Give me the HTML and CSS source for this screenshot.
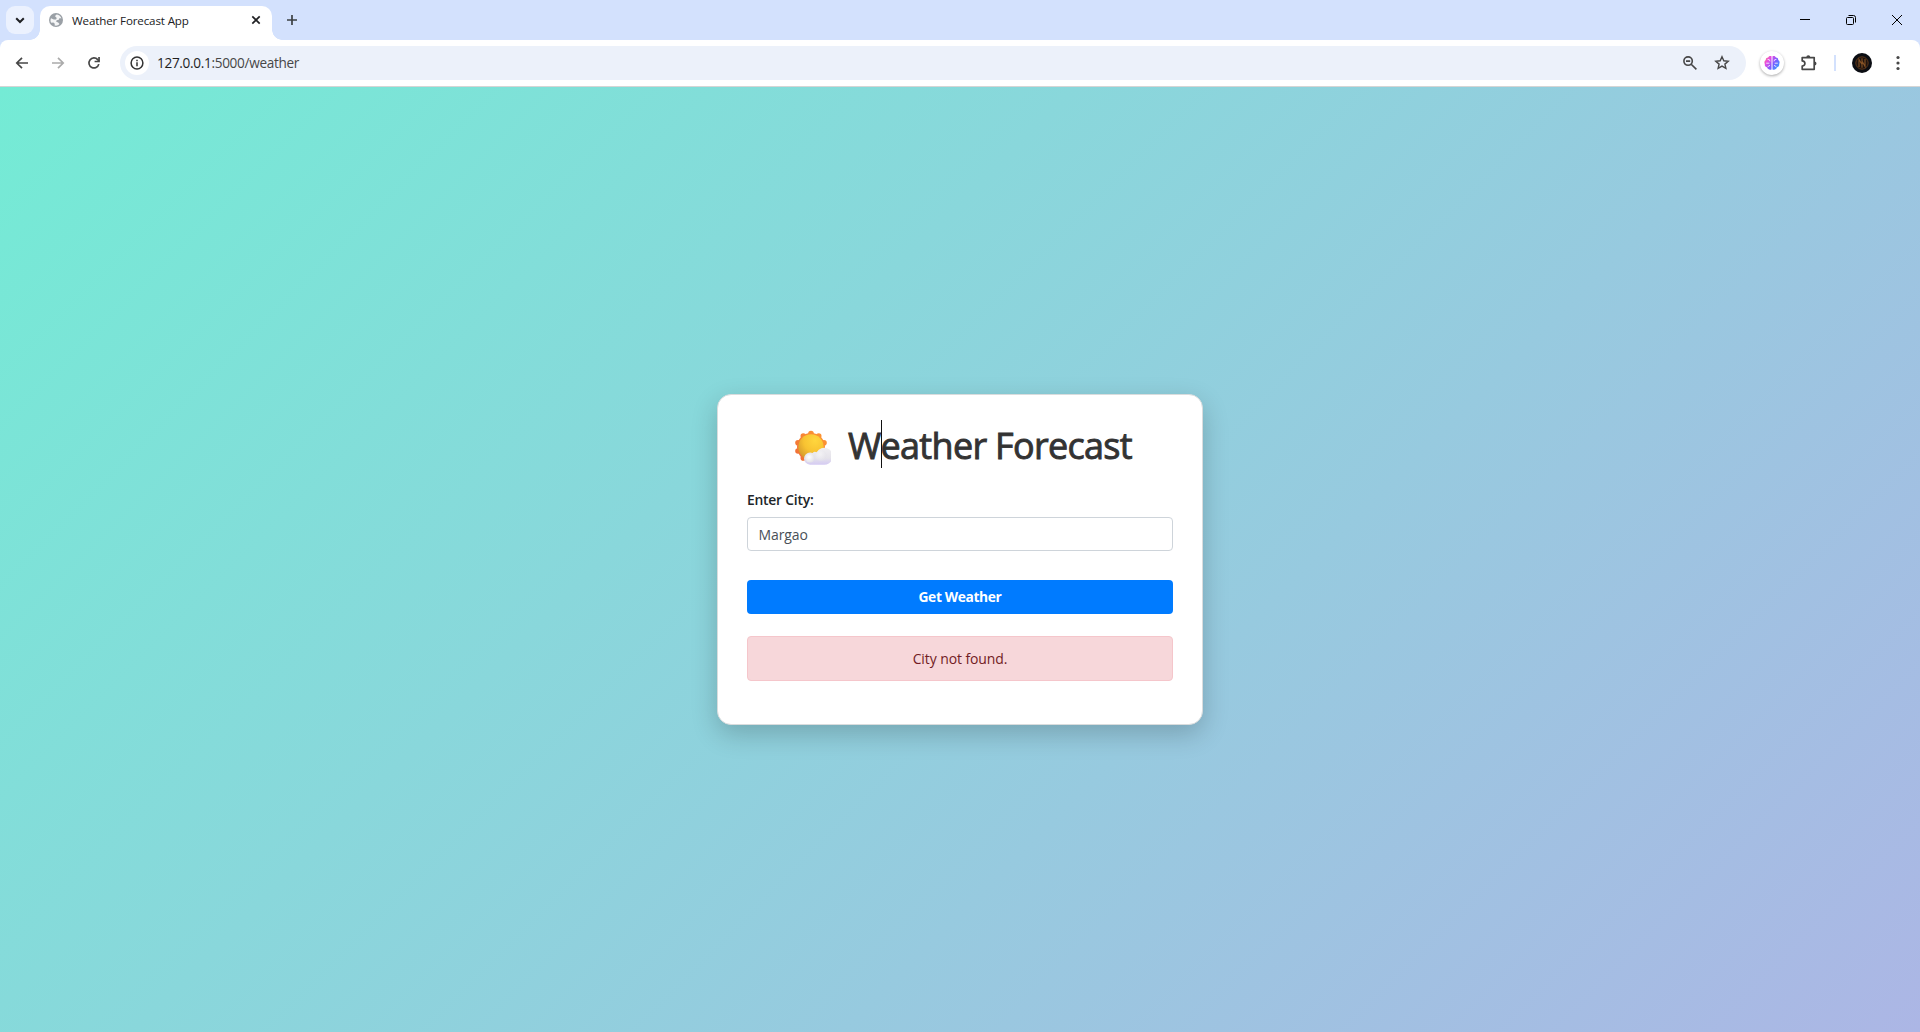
FILE: index.html
```html
<!DOCTYPE html>
<html lang="en">
<head>
<meta charset="utf-8">
<title>Weather Forecast App</title>
<link rel="stylesheet" href="styles.css">
</head>
<body>
<header class="browser">
  <div class="tab-strip">
    <button class="tab-search" aria-label="Search tabs"><svg width="28" height="28" viewBox="0 0 28 28"><path d="M10.2 12.2l3.8 3.8 3.8-3.8" fill="none" stroke="#202124" stroke-width="2"/></svg></button>
    <div class="tab">
      <svg class="favicon" width="14" height="14" viewBox="0 0 14 14"><circle cx="7" cy="7" r="7" fill="#9aa0a6"/><path d="M8 1.5c-1 .4-1.8 1-1.8 2L7.8 5 7 6.4H4.8L2 5.2C1.2 7 1.4 8.6 2.3 9.8l2.1-.2 1.4 1.2-.2 1.7c2 .4 3.6-.1 4.9-1.4L9.2 9.4l-2-.7.4-1.5 2.2-.5.8-1.6 1.8.3C11.8 3.3 10.1 1.8 8 1.5z" fill="#f4f5f6"/></svg>
      <span class="tab-title">Weather Forecast App</span>
      <svg class="tab-close" width="14" height="14" viewBox="0 0 14 14"><path d="M3.3 3.3l7.4 7.4M10.7 3.3l-7.4 7.4" stroke="#202124" stroke-width="1.7"/></svg>
    </div>
    <svg class="new-tab" width="14" height="14" viewBox="0 0 14 14"><path d="M7 2v10M2 7h10" stroke="#3c4043" stroke-width="1.7"/></svg>
    <div class="window-controls">
      <svg width="12" height="12" viewBox="0 0 12 12"><path d="M1 5.5h10" stroke="#000"/></svg>
      <svg width="12" height="12" viewBox="0 0 12 12" fill="none" stroke="#000"><rect x="1.5" y="3.5" width="7" height="7" rx="1"/><path d="M3.5 1.5h5q2 0 2 2v5"/></svg>
      <svg width="12" height="12" viewBox="0 0 12 12"><path d="M1 1l10 10M11 1L1 11" stroke="#000"/></svg>
    </div>
  </div>
  <div class="toolbar">
    <svg class="nav" width="16" height="16" viewBox="0 0 16 16" fill="none" stroke="#474747" stroke-width="1.7"><path d="M14 8H3M8 2.8L2.8 8 8 13.2"/></svg>
    <svg class="nav" width="16" height="16" viewBox="0 0 16 16" fill="none" stroke="#ababab" stroke-width="1.7"><path d="M2 8h11M8 2.8L13.2 8 8 13.2"/></svg>
    <svg class="nav" width="16" height="16" viewBox="0 0 16 16"><path d="M12.8 9.1A5 5 0 1 1 11.7 4.6L13 6" fill="none" stroke="#474747" stroke-width="1.7"/><path d="M13.9 2v5.3H8.6V5.7h3.6V2z" fill="#474747"/></svg>
    <div class="omnibox">
      <span class="site-info"><svg width="16" height="16" viewBox="0 0 16 16"><circle cx="8" cy="8" r="5.9" fill="none" stroke="#333" stroke-width="1.5"/><path d="M8 7.2v4M8 4.7v1.5" stroke="#333" stroke-width="1.5"/></svg></span>
      <span class="url"><b>127.0.0.1</b>:5000/weather</span>
      <svg class="zoom-icon" width="16" height="16" viewBox="0 0 16 16" fill="none" stroke="#474747" stroke-width="1.6"><circle cx="6.1" cy="6.1" r="4.2"/><path d="M9.2 9.2l5.2 5.2M4 6.1h4.2"/></svg>
      <svg width="16" height="16" viewBox="0 0 16 16"><path d="M8 1.8l1.8 4 4.4.4-3.3 2.9 1 4.3L8 11.1l-3.9 2.3 1-4.3-3.3-2.9 4.4-.4z" fill="none" stroke="#474747" stroke-width="1.4"/></svg>
    </div>
    <div class="extension">
      <svg width="16" height="16" viewBox="0 0 16 16"><defs><linearGradient id="brain" x1="0" y1="0" x2="16" y2="12" gradientUnits="userSpaceOnUse"><stop offset="0" stop-color="#ff9650"/><stop offset=".33" stop-color="#e84ae3"/><stop offset=".65" stop-color="#795cff"/><stop offset="1" stop-color="#31a6ff"/></linearGradient></defs><path d="M7.5 1.2C5.8.6 4.6 1.2 4.1 2.5 2.5 2.5 1.6 3.5 1.8 5 .3 6 .1 7.6.8 9c-.2 1.8.6 3 2 3.2.9 2.2 3 3 4.7 2.2zM8.5 1.2C10.2.6 11.4 1.2 11.9 2.5c1.6 0 2.5 1 2.3 2.5 1.5 1 1.7 2.6 1 4 .2 1.8-.6 3-2 3.2-.9 2.2-3 3-4.7 2.2z" fill="url(#brain)"/><path d="M3.6 4.4q2.4-.2 2.4 1.9M2.2 8.2h3.2M3.6 11.8l2.4-1.5M12.4 4.4q-2.4-.2-2.4 1.9M13.8 8.2h-3.2M12.4 11.8l-2.4-1.5" fill="none" stroke="#f4eeff" stroke-width=".9"/></svg>
    </div>
    <svg class="puzzle" width="18" height="18" viewBox="0 0 18 18"><path d="M2.2 3.6H14.2V15.3H2.2V12c3.6-.4 3.6-4.7 0-5.1z" fill="none" stroke="#474747" stroke-width="1.7" stroke-linejoin="round"/><path d="M6.3 3.2a2 2 0 0 1 4 0zM14.5 7.4a2 2 0 0 1 0 4z" fill="#474747"/></svg>
    <span class="divider"></span>
    <svg class="avatar" width="20" height="20" viewBox="0 0 20 20"><circle cx="10" cy="10" r="10" fill="#0b0d13"/><circle cx="10" cy="10" r="6.2" fill="#20140f" stroke="#5b3518"/><path d="M7 14V6.5l3 5V5.2M10 14.7V8l3 5.3V6" fill="none" stroke="#865225" stroke-width="1.1"/></svg>
    <svg class="menu" width="4" height="16" viewBox="0 0 4 16" fill="#474747"><circle cx="2" cy="2.5" r="1.6"/><circle cx="2" cy="8" r="1.6"/><circle cx="2" cy="13.5" r="1.6"/></svg>
  </div>
</header>
<main class="page">
  <section class="card">
    <h1 class="heading">
      <svg class="sun" width="38" height="36" viewBox="0 0 38 36">
        <defs>
          <linearGradient id="rays" x1="36" y1="0" x2="0" y2="34" gradientUnits="userSpaceOnUse"><stop offset="0" stop-color="#ff9d31"/><stop offset="1" stop-color="#ee6738"/></linearGradient>
          <radialGradient id="disc" cx=".66" cy=".25" r=".8"><stop offset="0" stop-color="#ffd63d"/><stop offset=".55" stop-color="#f8c332"/><stop offset="1" stop-color="#d59a2c"/></radialGradient>
          <linearGradient id="cloud" x1="0" y1="0" x2="0" y2="1"><stop offset="0" stop-color="#f0eff2"/><stop offset=".6" stop-color="#e5e3ea"/><stop offset="1" stop-color="#d4caf3"/></linearGradient>
          <radialGradient id="puff" cx=".4" cy=".4" r=".6"><stop offset="0" stop-color="#fff"/><stop offset="1" stop-color="#e3e2e8"/></radialGradient>
        </defs>
        <g fill="url(#rays)"><circle cx="18" cy="17" r="14"/><circle cx="18" cy="3.6" r="2.8"/><circle cx="25.7" cy="6.1" r="2.8"/><circle cx="31" cy="12.8" r="2.8"/><circle cx="31" cy="21" r="2.8"/><circle cx="10.3" cy="6.1" r="2.8"/><circle cx="5" cy="12.8" r="2.8"/><circle cx="5" cy="21" r="2.8"/><circle cx="10.3" cy="27.9" r="2.8"/></g>
        <circle cx="18" cy="17" r="12.7" fill="url(#disc)"/>
        <path d="M17 34.7a6.1 6.1 0 0 1 .2-12.2q1.3 0 2.4.4 1.8-2.1 4.2-.6a8.5 8.5 0 1 1 6 12.4z" fill="url(#cloud)"/>
        <circle cx="17" cy="28" r="4.5" fill="url(#puff)"/><circle cx="28" cy="25.5" r="5.5" fill="url(#puff)" opacity=".45"/>
      </svg>
      <span class="title">W<i class="caret"></i>eather Forecast</span>
    </h1>
    <form class="form">
      <label class="label" for="city"><span>Enter City:</span></label>
      <input class="input" id="city" value="Margao">
      <button class="submit" type="button">Get Weather</button>
    </form>
    <div class="alert">City not found.</div>
  </section>
</main>
</body>
</html>
```
FILE: styles.css
```css
* { box-sizing: border-box; }
body { margin: 0; height: 1032px; display: flex; flex-direction: column; overflow: hidden; font-family: "Open Sans", "Noto Sans", sans-serif; }
svg { display: block; flex: none; }
button { border: 0; padding: 0; }
.browser { height: 87px; background: #d3e1fd; border-bottom: 1px solid #d5d5d5; flex: none; }
.tab-strip { height: 40px; display: flex; align-items: center; padding: 0 6px; }
.tab-search { width: 28px; height: 28px; border-radius: 9px; background: #ebf1fe; }
.tab { position: relative; width: 232px; height: 34px; margin: 6px 0 0 6px; padding: 0 9px; background: #fff; border-radius: 10px 10px 0 0; display: flex; align-items: center; }
.tab::before, .tab::after { content: ""; position: absolute; bottom: 0; width: 10px; height: 10px; }
.tab::before { left: -10px; background: radial-gradient(circle at 0 0, transparent 9.5px, #fff 10px); }
.tab::after { right: -10px; background: radial-gradient(circle at 100% 0, transparent 9.5px, #fff 10px); }
.favicon { margin-top: -6px; }
.tab-title { margin: -4px 0 0 9px; font-size: 11.6px; line-height: 18px; letter-spacing: -.14px; color: #202124; white-space: nowrap; }
.tab-close { margin: -6px 0 0 auto; }
.new-tab { margin-left: 13px; }
.window-controls { display: flex; gap: 34px; margin-left: auto; padding-right: 11px; }
.toolbar { height: 46px; background: #fff; border-radius: 8px 8px 0 0; display: flex; align-items: center; padding: 0 20px 0 14px; }
.nav { margin-right: 20px; }
.omnibox { width: 1626px; height: 34px; background: #ecf1fa; border-radius: 17px; display: flex; align-items: center; padding: 0 16px 0 5px; margin-left: -2px; }
.site-info { width: 24px; height: 24px; border-radius: 50%; background: #fff; display: grid; place-items: center; }
.url { margin: 0 0 0 8px; font-size: 13.6px; line-height: 20px; letter-spacing: -.32px; color: #474747; }
.url b { font-weight: 400; color: #1f1f1f; }
.zoom-icon { margin: 0 16px 0 auto; }
.extension { width: 24px; height: 24px; margin-left: 14px; border-radius: 50%; background: #fff; box-shadow: 0 1px 3px #0005; display: grid; place-items: center; }
.puzzle { margin-left: 16px; }
.divider { width: 2px; height: 16px; background: #d3e1fd; margin-left: 16px; }
.avatar { margin-left: 16px; }
.menu { margin-left: auto; }
.page { flex: 1; display: flex; align-items: center; justify-content: center; background: linear-gradient(135deg, #74ebd5, #acb6e5); }
.card { width: 486px; height: 331px; padding: 28px 29px; background: #fff; border: 1px solid #d9dcdd; border-radius: 14px; box-shadow: 0 9px 27px #0003; }
.heading { height: 44px; margin: 0 0 2px; padding-left: 46px; display: flex; align-items: center; gap: 17px; color: #333; }
.sun { margin-top: 5px; }
.title { position: relative; padding-top: 2px; font-size: 36px; font-weight: 400; line-height: 44px; letter-spacing: -.7px; -webkit-text-stroke: .9px #333; white-space: nowrap; }
.caret { position: absolute; left: 33px; top: -2px; width: 1px; height: 48px; background: #111; }
.form { display: flex; flex-direction: column; }
.label { margin-top: 20px; height: 20px; font-size: 13.9px; line-height: 21px; letter-spacing: -.24px; font-weight: 600; color: #212529; }
.input { margin-top: 8px; height: 34px; padding: 1px 11px 0 10.5px; border: 1px solid #ced4da; border-radius: 4px; font: 14px/22px "Open Sans", "Noto Sans", sans-serif; letter-spacing: -.1px; color: #495057; background: #fff; }
.submit { margin-top: 29px; height: 34px; background: #007bff; border-radius: 4px; color: #fff; font: 700 13.8px/34px "Open Sans", "Noto Sans", sans-serif; letter-spacing: -.36px; }
.alert { margin-top: 22px; height: 45px; border: 1px solid #f5c6cb; border-radius: 4px; background: #f7d7da; color: #721c24; text-align: center; font-size: 14px; line-height: 44px; letter-spacing: -.1px; }
```
